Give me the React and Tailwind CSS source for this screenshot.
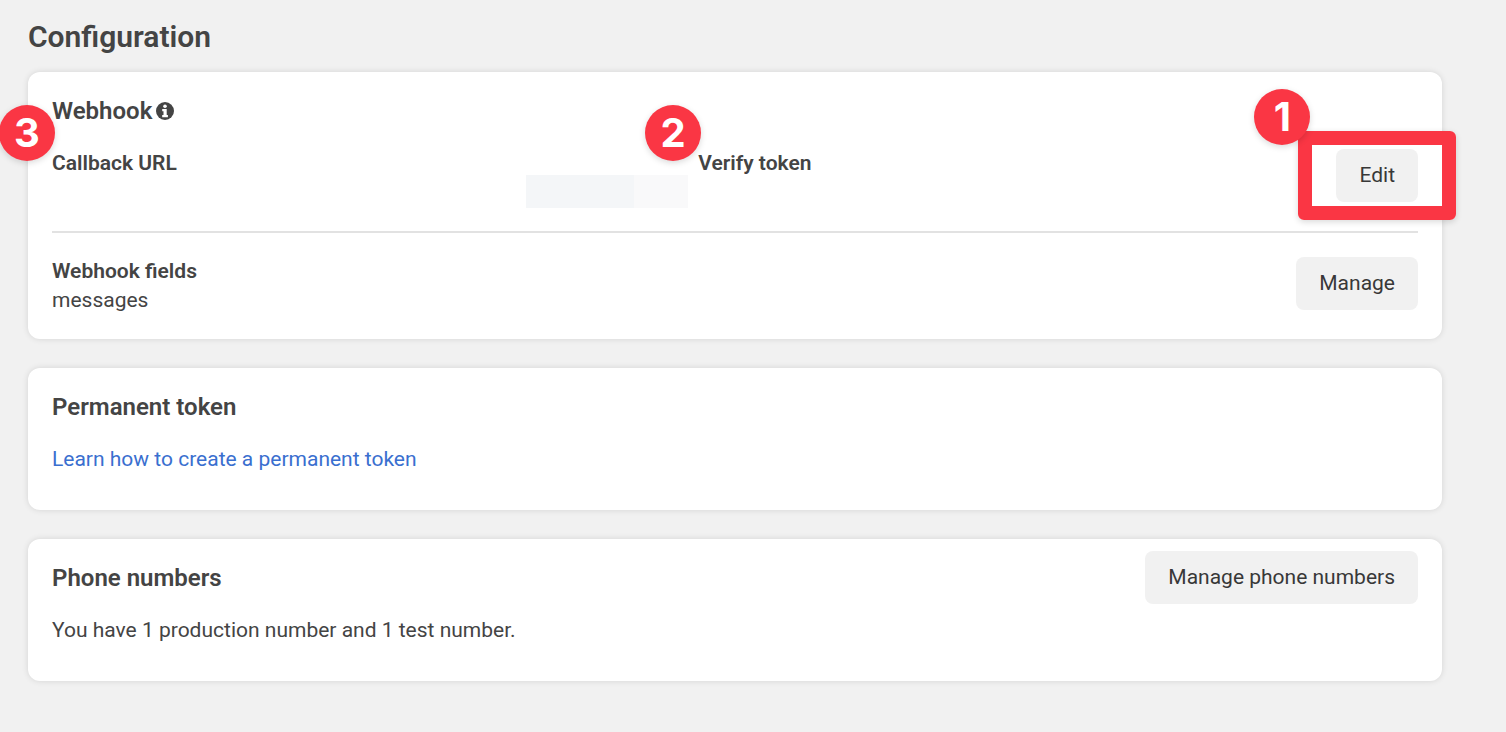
function Card({ children }) {
  return (
    <section className="rounded-xl bg-white px-6 shadow-[0_0_6px_rgba(0,0,0,0.12)]">{children}</section>
  );
}

function CardTitle({ children }) {
  return <h2 className="flex items-center gap-1 text-[24px] leading-[30px] font-semibold text-[#444]">{children}</h2>;
}

function Button({ children }) {
  return (
    <button type="button" className="h-[53px] shrink-0 rounded-lg bg-[#f1f1f1] px-[23px] text-[21px] leading-[29px] text-[#383838]">
      {children}
    </button>
  );
}

function Step({ number, className }) {
  return (
    <span
      className={`absolute flex size-14 items-center justify-center rounded-full bg-[#fa3644] font-[Inter,sans-serif] text-[40px] leading-none font-bold text-white shadow-[0_2px_6px_rgba(0,0,0,0.15)] ${className}`}
    >
      {number}
    </span>
  );
}

function InfoIcon() {
  return (
    <svg viewBox="0 0 18 18" className="size-[18px]" role="img" aria-label="Info">
      <circle cx="9" cy="9" r="9" fill="#444" />
      <circle cx="9" cy="4.2" r="1.8" fill="#fff" />
      <path d="M6.2 7h4.5v6h1.2v2.2H6.2V13h1.3V9.2H6.2z" fill="#fff" />
    </svg>
  );
}

export default function App() {
  return (
    <main className="min-h-screen overflow-x-hidden bg-[#f1f1f1] pt-[19px] pr-16 pb-12 pl-7 font-[Roboto,sans-serif] text-[21px] leading-[29px] text-[#444]">
      <h1 className="mb-[17px] text-[30px] leading-9 font-semibold text-[#444]">Configuration</h1>
      <div className="flex flex-col gap-[29px]">
        <Card>
          <div className="pt-6 pb-[29px]">
            <CardTitle>
              Webhook <InfoIcon />
            </CardTitle>
            <div className="mt-[23px] flex items-start">
              <div className="grid flex-1 grid-cols-2 gap-2">
                <div className="relative">
                  <h3 className="font-semibold">Callback URL</h3>
                  <div className="absolute top-[26px] right-0.5 flex h-[33px] w-[162px]">
                    <span className="w-2/3 bg-[#f4f6f8]" />
                    <span className="w-1/3 bg-[#f9f9fa]" />
                  </div>
                  <Step number={3} className="-top-11 -left-[53px]" />
                </div>
                <div className="relative">
                  <h3 className="font-semibold">Verify token</h3>
                  <Step number={2} className="-top-11 -left-[53px]" />
                </div>
              </div>
              <div className="relative flex">
                <Button>Edit</Button>
                <div className="pointer-events-none absolute -inset-x-[38px] -inset-y-[18px] rounded-md border-[14px] border-[#fa3644] shadow-[0_2px_6px_rgba(0,0,0,0.15)]" />
                <Step number={1} className="-top-[60px] -left-[82px]" />
              </div>
            </div>
          </div>
          <div className="flex items-start justify-between border-t-2 border-[#e2e2e2] pt-6 pb-6">
            <div>
              <h3 className="font-semibold">Webhook fields</h3>
              <p>messages</p>
            </div>
            <Button>Manage</Button>
          </div>
        </Card>
        <Card>
          <div className="pt-6 pb-9">
            <CardTitle>Permanent token</CardTitle>
            <p className="mt-[23px]">
              <a href="#permanent-token" className="text-[#3a6fcf]">
                Learn how to create a permanent token
              </a>
            </p>
          </div>
        </Card>
        <Card>
          <div className="flex items-start justify-between pt-3 pb-9">
            <div className="pt-3">
              <CardTitle>Phone numbers</CardTitle>
              <p className="mt-[23px]">You have 1 production number and 1 test number.</p>
            </div>
            <Button>Manage phone numbers</Button>
          </div>
        </Card>
      </div>
    </main>
  );
}
